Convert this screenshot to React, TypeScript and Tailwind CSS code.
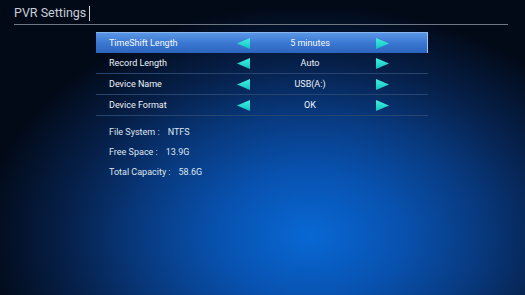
import React from "react";

const rows = [
  { label: "TimeShift Length", value: "5 minutes", selected: true },
  { label: "Record Length", value: "Auto" },
  { label: "Device Name", value: "USB(A:)" },
  { label: "Device Format", value: "OK" },
];

const info = [
  { k: "File System :", v: "NTFS" },
  { k: "Free Space :", v: "13.9G" },
  { k: "Total Capacity :", v: "58.6G" },
];

function Arrow({ dir }: { dir: "left" | "right" }) {
  return (
    <svg width="13" height="11" viewBox="0 0 13 11" className="block">
      <defs>
        <linearGradient id={`g-${dir}`} x1="0" y1="0" x2="0" y2="1">
          <stop offset="0" stopColor="#3ff0e0" />
          <stop offset="1" stopColor="#12c4c0" />
        </linearGradient>
      </defs>
      {dir === "left" ? (
        <polygon points="0,5.5 13,0 13,11" fill={`url(#g-${dir})`} />
      ) : (
        <polygon points="13,5.5 0,0 0,11" fill={`url(#g-${dir})`} />
      )}
    </svg>
  );
}

export default function App() {
  return (
    <div
      className="relative w-[525px] h-[295px] overflow-hidden bg-[radial-gradient(ellipse_62%_78%_at_59%_80%,#0868d4_0%,#0852b0_28%,#083a80_52%,#06204a_75%,#020a18_100%)] text-white"
      style={{ fontFamily: "Roboto, 'Noto Sans', sans-serif" }}
    >
      <div className="px-[14px] pt-[4px]">
        <div className="flex items-center h-[19px]">
          <span className="text-[12.5px] leading-none text-[#c9ced8]">PVR Settings</span>
          <span className="ml-[3px] w-[1px] h-[15px] bg-[#c9ced8]" />
        </div>
        <div className="mt-[1px] h-[1px] w-[494px] bg-[#6f7684]" />
      </div>

      <div className="ml-[96px] mt-[7px] w-[332px]">
        {rows.map((r) => (
          <div
            key={r.label}
            className={
              r.selected
                ? "flex items-center h-[21px] bg-gradient-to-b from-[#5a96e4] via-[#3b78d3] to-[#2c64bd] border-t border-[#86b4ef] border-r border-r-[#9cc4f4] text-[#f4f7fc]"
                : "flex items-center h-[21px] border-b border-[#27456e] text-[#eef2f8]"
            }
          >
            <span className="pl-[13px] w-[141px] text-[9px] leading-none whitespace-nowrap">{r.label}</span>
            <Arrow dir="left" />
            <span className="w-[120px] text-center text-[9px] leading-none">{r.value}</span>
            <span className="ml-[6px]">
              <Arrow dir="right" />
            </span>
          </div>
        ))}
      </div>

      <div className="ml-[109px] mt-[11px] flex flex-col gap-[9px] text-[9px] leading-[11px] text-[#dfe5ee]">
        {info.map((i) => (
          <div key={i.k} className="flex">
            <span>{i.k}</span>
            <span className="ml-[8px]">{i.v}</span>
          </div>
        ))}
      </div>
    </div>
  );
}
